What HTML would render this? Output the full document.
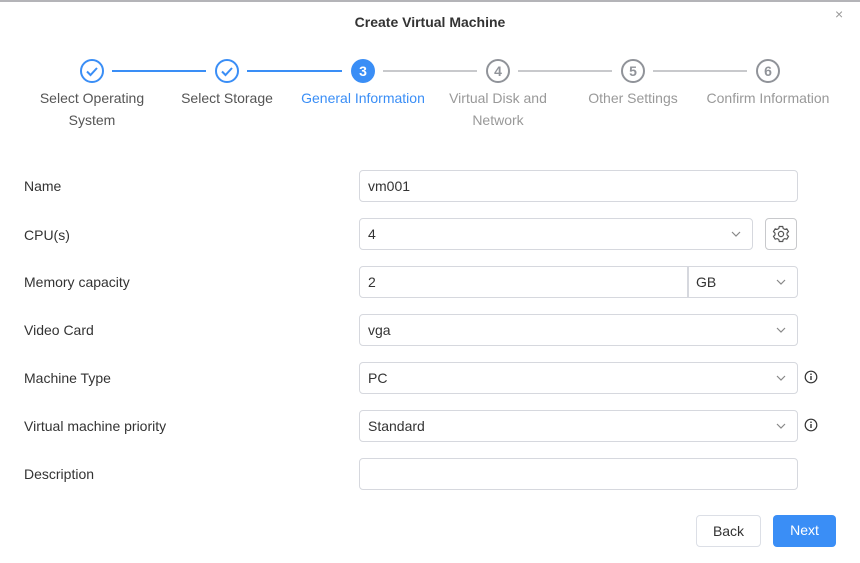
<!DOCTYPE html>
<html><head><meta charset="utf-8"><style>
*{box-sizing:border-box;margin:0;padding:0}
body{width:860px;height:563px;background:#fff;font-family:"Liberation Sans",sans-serif;position:relative;overflow:hidden}
.abs{position:absolute}
.title{left:0;width:860px;top:14px;text-align:center;font-size:14px;font-weight:bold;color:#333}
.close{left:835px;top:6px;font-size:14px;color:#999}
.circ{width:24px;height:24px;border-radius:50%;top:59px}
.done{border:2px solid #3a8ef6}
.cur{background:#3a8ef6;color:#fff;font-weight:bold;font-size:14px;text-align:center;line-height:24px}
.todo{border:2px solid #909399;color:#909399;font-weight:bold;font-size:14px;text-align:center;line-height:20px}
.line{height:2px;top:70px}
.lbl{font-size:14px;color:#555;text-align:center;line-height:22px;top:87px;width:140px}
.row{left:24px;font-size:14px;color:#333}
.inp{left:359px;height:32px;border:1px solid #d6d8de;border-radius:4px;font-size:14px;color:#333;padding-left:8px;line-height:30px}
.chev{position:absolute;right:10px;top:9px}
.btn{height:32px;border-radius:4px;font-size:14px;text-align:center;line-height:30px;top:515px}
</style></head><body>
<div class="abs" style="left:0;top:0;width:860px;height:2px;background:#b4b4b8"></div>
<div class="abs title">Create Virtual Machine</div>
<div class="abs close">×</div>

<div class="abs circ done" style="left:80px"><svg width="20" height="20" viewBox="0 0 20 20"><path d="M5 10.5l3.5 3.5 6.5-7" fill="none" stroke="#3a8ef6" stroke-width="2"/></svg></div>
<div class="abs line" style="left:112px;width:94px;background:#3a8ef6"></div>
<div class="abs circ done" style="left:215px"><svg width="20" height="20" viewBox="0 0 20 20"><path d="M5 10.5l3.5 3.5 6.5-7" fill="none" stroke="#3a8ef6" stroke-width="2"/></svg></div>
<div class="abs line" style="left:247px;width:95px;background:#3a8ef6"></div>
<div class="abs circ cur" style="left:351px">3</div>
<div class="abs line" style="left:383px;width:94px;background:#c8c9cc"></div>
<div class="abs circ todo" style="left:486px">4</div>
<div class="abs line" style="left:518px;width:94px;background:#c8c9cc"></div>
<div class="abs circ todo" style="left:621px">5</div>
<div class="abs line" style="left:653px;width:94px;background:#c8c9cc"></div>
<div class="abs circ todo" style="left:756px">6</div>

<div class="abs lbl" style="left:22px">Select Operating<br>System</div>
<div class="abs lbl" style="left:157px">Select Storage</div>
<div class="abs lbl" style="left:293px;color:#3a8ef6">General Information</div>
<div class="abs lbl" style="left:428px;color:#999">Virtual Disk and<br>Network</div>
<div class="abs lbl" style="left:563px;color:#999">Other Settings</div>
<div class="abs lbl" style="left:698px;color:#999">Confirm Information</div>

<div class="abs row" style="top:178px">Name</div>
<div class="abs inp" style="top:170px;width:439px">vm001</div>

<div class="abs row" style="top:227px">CPU(s)</div>
<div class="abs inp" style="top:218px;width:394px">4<svg class="chev" width="12" height="12" viewBox="0 0 12 12"><path d="M2 4l4 4 4-4" fill="none" stroke="#888" stroke-width="1.2"/></svg></div>
<div class="abs" style="left:765px;top:218px;width:32px;height:32px;border:1px solid #c8c9cc;border-radius:4px"><svg width="30" height="30" viewBox="0 0 30 30" style="position:absolute;left:0;top:0"><g fill="none" stroke="#555" stroke-width="1.2"><path d="M13.3 7.5h3.4l.5 2 1.6.9 2-.6 1.7 2.9-1.5 1.4v1.8l1.5 1.4-1.7 2.9-2-.6-1.6.9-.5 2h-3.4l-.5-2-1.6-.9-2 .6-1.7-2.9 1.5-1.4v-1.8l-1.5-1.4 1.7-2.9 2 .6 1.6-.9z"/><circle cx="15" cy="15" r="2.6"/></g></svg></div>

<div class="abs row" style="top:274px">Memory capacity</div>
<div class="abs inp" style="top:266px;width:330px;border-radius:4px 0 0 4px">2</div>
<div class="abs inp" style="top:266px;left:687px;width:111px;border-radius:0 4px 4px 0">GB<svg class="chev" width="12" height="12" viewBox="0 0 12 12"><path d="M2 4l4 4 4-4" fill="none" stroke="#888" stroke-width="1.2"/></svg></div>

<div class="abs row" style="top:322px">Video Card</div>
<div class="abs inp" style="top:314px;width:439px">vga<svg class="chev" width="12" height="12" viewBox="0 0 12 12"><path d="M2 4l4 4 4-4" fill="none" stroke="#888" stroke-width="1.2"/></svg></div>

<div class="abs row" style="top:370px">Machine Type</div>
<div class="abs inp" style="top:362px;width:439px">PC<svg class="chev" width="12" height="12" viewBox="0 0 12 12"><path d="M2 4l4 4 4-4" fill="none" stroke="#888" stroke-width="1.2"/></svg></div>
<svg class="abs" style="left:804px;top:370px" width="14" height="14" viewBox="0 0 14 14"><circle cx="7" cy="7" r="5.8" fill="none" stroke="#333" stroke-width="1.2"/><rect x="6.3" y="6" width="1.4" height="4" fill="#333"/><circle cx="7" cy="4.2" r=".8" fill="#333"/></svg>

<div class="abs row" style="top:418px">Virtual machine priority</div>
<div class="abs inp" style="top:410px;width:439px">Standard<svg class="chev" width="12" height="12" viewBox="0 0 12 12"><path d="M2 4l4 4 4-4" fill="none" stroke="#888" stroke-width="1.2"/></svg></div>
<svg class="abs" style="left:804px;top:418px" width="14" height="14" viewBox="0 0 14 14"><circle cx="7" cy="7" r="5.8" fill="none" stroke="#333" stroke-width="1.2"/><rect x="6.3" y="6" width="1.4" height="4" fill="#333"/><circle cx="7" cy="4.2" r=".8" fill="#333"/></svg>

<div class="abs row" style="top:466px">Description</div>
<div class="abs inp" style="top:458px;width:439px"></div>

<div class="abs btn" style="left:696px;width:65px;border:1px solid #dcdfe6;color:#333">Back</div>
<div class="abs btn" style="left:773px;width:63px;background:#3a8ef6;color:#fff">Next</div>
</body></html>
